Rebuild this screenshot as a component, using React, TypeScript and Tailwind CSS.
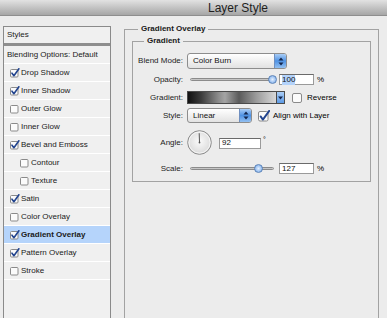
import React from 'react'

type Item = { label: string; on: boolean; indent?: boolean; selected?: boolean }

const items: Item[] = [
  { label: 'Drop Shadow', on: true },
  { label: 'Inner Shadow', on: true },
  { label: 'Outer Glow', on: false },
  { label: 'Inner Glow', on: false },
  { label: 'Bevel and Emboss', on: true },
  { label: 'Contour', on: false, indent: true },
  { label: 'Texture', on: false, indent: true },
  { label: 'Satin', on: true },
  { label: 'Color Overlay', on: false },
  { label: 'Gradient Overlay', on: true, selected: true },
  { label: 'Pattern Overlay', on: true },
  { label: 'Stroke', on: false },
]

function Check({ on }: { on: boolean }) {
  return (
    <svg width="10" height="10" viewBox="0 0 10 10" className="shrink-0">
      <rect x="0.5" y="1.5" width="7.5" height="7.5" rx="1" fill="#fbfbfb" stroke="#8a8a8a" />
      {on && <path d="M2 5.2 L3.9 7.7 L8.9 0.8" stroke="#22448e" strokeWidth="1.6" fill="none" strokeLinecap="round" strokeLinejoin="round" />}
    </svg>
  )
}

function BigCheck({ on }: { on: boolean }) {
  return (
    <svg width="12" height="12" viewBox="0 0 12 12" className="shrink-0">
      <rect x="0.5" y="1.5" width="9.5" height="9.5" rx="1.5" fill="#fbfbfb" stroke="#8a8a8a" />
      {on && <path d="M2.6 6.4 L4.9 9.6 L11.2 0.9" stroke="#22448e" strokeWidth="1.9" fill="none" strokeLinecap="round" strokeLinejoin="round" />}
    </svg>
  )
}

function Arrows() {
  return (
    <svg width="6" height="9" viewBox="0 0 6 9">
      <path d="M3 0.5 L5.5 3.5 L0.5 3.5 Z" fill="#13264d" />
      <path d="M3 8.5 L5.5 5.5 L0.5 5.5 Z" fill="#13264d" />
    </svg>
  )
}

function Popup({ value, className }: { value: string; className: string }) {
  return (
    <div className={`flex items-stretch rounded-[3px] border border-[#8d8d8d] bg-linear-to-b from-white to-[#e2e2e2] ${className}`}>
      <span className="flex flex-1 items-center pl-[5px] text-[#111]">{value}</span>
      <span className="flex w-[12px] items-center justify-center rounded-r-[2px] border-l border-[#6f8fc0] bg-linear-to-b from-[#a9cdf6] via-[#4f92e3] to-[#93c0f1]">
        <Arrows />
      </span>
    </div>
  )
}

function Slider({ pos }: { pos: number }) {
  return (
    <div className="relative flex h-[11px] w-[88px] items-center pl-[3px] pr-[1px]">
      <div className="h-[3px] w-full rounded-full border border-[#8b8b8b] bg-linear-to-b from-[#a8a8a8] to-[#e4e4e4]" />
      <div
        className="absolute top-[1px] h-[9px] w-[9px] rounded-full border border-[#5e84b8] bg-radial from-[#e4f0ff] to-[#6ea3e6]"
        style={{ left: pos }}
      />
    </div>
  )
}

function Field({ children, className }: { children: React.ReactNode; className: string }) {
  return (
    <div className={`flex h-[11px] items-center border border-[#9a9a9a] border-t-[#6a6a6a] bg-white pl-[2px] text-[#111] ${className}`}>
      {children}
    </div>
  )
}

function Row({ label, children, className }: { label: string; children: React.ReactNode; className: string }) {
  return (
    <div className={`flex items-center ${className}`}>
      <span className="w-[50px] text-right text-[#1c1c1c]">{label}</span>
      <div className="ml-[4px] flex items-center">{children}</div>
    </div>
  )
}

function Dial() {
  return (
    <svg width="25" height="25" viewBox="0 0 25 25">
      <defs>
        <radialGradient id="dialFill" cx="50%" cy="45%" r="60%">
          <stop offset="0%" stopColor="#fbfbfb" />
          <stop offset="100%" stopColor="#d6d6d6" />
        </radialGradient>
      </defs>
      <circle cx="12.5" cy="12.5" r="11.8" fill="url(#dialFill)" stroke="#8c8c8c" />
      <circle cx="12.5" cy="12.5" r="10.6" fill="none" stroke="#ffffff" strokeOpacity="0.7" />
      <line x1="12.5" y1="12.5" x2="12.2" y2="3.2" stroke="#555" strokeWidth="1" />
      <circle cx="12.5" cy="12.5" r="0.9" fill="#555" />
    </svg>
  )
}

export default function App() {
  return (
    <div className="h-[318px] w-[387px] overflow-hidden bg-[#ececec] font-['Liberation_Sans',Arial,sans-serif] text-[8px] leading-[10px]">
      {/* title bar */}
      <div className="flex h-[16px] w-[476px] items-center justify-center border-b border-[#8e8e8e] bg-linear-to-b from-[#e2e2e2] to-[#a6a6a6] text-[12px] leading-[14px] text-[#1e1e1e]">
        Layer Style
      </div>

      <div className="flex items-start">
        {/* styles list */}
        <div className="ml-[3px] mt-[10px] h-[320px] w-[108px] border border-[#8a8a8a] bg-[#f0f0f0] text-[#1a1a1a]">
          <div className="flex h-[19px] items-center border-b-[3px] border-[#8e8e8e] pl-[3px]">Styles</div>
          <div className="flex h-[18px] items-center border-b border-white pl-[3px]">Blending Options: Default</div>
          {items.map((it) => (
            <div
              key={it.label}
              className={`flex h-[18px] items-center gap-[1px] border-b border-white ${it.indent ? 'pl-[16px]' : 'pl-[6px]'} ${it.selected ? 'bg-[#b5d4fb] font-bold' : ''}`}
            >
              <Check on={it.on} />
              <span>{it.label}</span>
            </div>
          ))}
        </div>

        {/* gradient overlay group */}
        <fieldset className="ml-[13px] mt-[8px] h-[310px] w-[255px] border border-[#a2a2a2]">
          <legend className="ml-[13px] px-[3px] font-bold text-[#1a1a1a]">Gradient Overlay</legend>
          <div className="px-[7px] pt-[2px]">
            <fieldset className="w-[239px] border border-[#a2a2a2]">
              <legend className="ml-[11px] px-[3px] font-bold text-[#1a1a1a]">Gradient</legend>
              <div className="pb-[7px] pt-[7px]">
                <Row label="Blend Mode:" className="h-[16px]">
                  <Popup value="Color Burn" className="h-[16px] w-[100px]" />
                </Row>

                <Row label="Opacity:" className="mt-[5px] h-[11px]">
                  <Slider pos={81} />
                  <Field className="ml-[4px] w-[35px]">
                    <span className="bg-[#b3d3fb]">100</span>
                  </Field>
                  <span className="ml-[3px]">%</span>
                </Row>

                <Row label="Gradient:" className="mt-[6px] h-[13px]">
                  <div className="h-[13px] w-[90px] border border-[#4a4a4a]">
                    <div className="h-full w-full bg-[linear-gradient(to_right,#111_0%,#3c3c3c_15%,#8d8d8d_35%,#a4a4a4_42%,#5a5a5a_58%,#9c9c9c_78%,#d8d8d8_100%)]" />
                  </div>
                  <div className="flex h-[13px] w-[8px] items-center justify-center border border-l-0 border-[#4a4a4a] bg-linear-to-b from-[#a9cdf6] to-[#5d9ae4]">
                    <svg width="5" height="4" viewBox="0 0 5 4">
                      <path d="M0 0.5 L5 0.5 L2.5 3.5 Z" fill="#13264d" />
                    </svg>
                  </div>
                  <div className="ml-[7px] flex items-center">
                    <svg width="10" height="10" viewBox="0 0 10 10">
                      <rect x="0.5" y="0.5" width="9" height="9" rx="1.5" fill="#fbfbfb" stroke="#8a8a8a" />
                    </svg>
                    <span className="ml-[5px]">Reverse</span>
                  </div>
                </Row>

                <Row label="Style:" className="mt-[4px] h-[15px]">
                  <Popup value="Linear" className="h-[15px] w-[65px]" />
                  <div className="ml-[6px] flex items-center">
                    <BigCheck on />
                    <span className="ml-[3px]">Align with Layer</span>
                  </div>
                </Row>

                <Row label="Angle:" className="mt-[7px] h-[25px]">
                  <Dial />
                  <Field className="ml-[7px] mt-[1px] w-[42px]">92</Field>
                  <span className="mb-[6px] ml-[2px] text-[7px]">°</span>
                </Row>

                <Row label="Scale:" className="mt-[8px] h-[11px]">
                  <Slider pos={67} />
                  <Field className="ml-[4px] w-[35px]">127</Field>
                  <span className="ml-[3px]">%</span>
                </Row>
              </div>
            </fieldset>
          </div>
        </fieldset>
      </div>
    </div>
  )
}
